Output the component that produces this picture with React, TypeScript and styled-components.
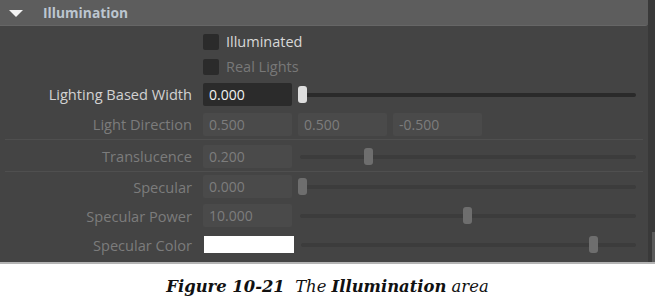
import { FC } from "react";
import styled, { createGlobalStyle } from "styled-components";

const GlobalStyle = createGlobalStyle`
    body {
        margin: 0;
        background: #fff;
    }
`

type SliderProps = { value: number; active?: boolean }

const Slider: FC<SliderProps> = ({ value, active }) => (
    <SliderWrap>
        <Track $active={active} />
        <Thumb $active={active} style={{ left: `calc(${value} * (100% - 9px))` }} />
    </SliderWrap>
)

type RowProps = { label: string; dim?: boolean; children?: React.ReactNode; height?: number }

const Row: FC<RowProps> = ({ label, dim, children, height }) => (
    <RowWrap $height={height}>
        <Label $dim={dim}>{label}</Label>
        <Controls>{children}</Controls>
    </RowWrap>
)

export default function App() {
    return <>
        <GlobalStyle />
        <Page>
            <Panel>
                <Main>
                    <Header>
                        <Arrow />
                        <Title>Illumination</Title>
                    </Header>
                    <Group $top={3}>
                        <CheckRow>
                            <Box />
                            <CheckText>Illuminated</CheckText>
                        </CheckRow>
                        <CheckRow>
                            <Box />
                            <CheckText $dim>Real Lights</CheckText>
                        </CheckRow>
                        <Row label="Lighting Based Width">
                            <Field $active>0.000</Field>
                            <Slider value={0} active />
                        </Row>
                        <Row label="Light Direction" dim>
                            <Field>0.500</Field>
                            <Field>0.500</Field>
                            <Field>-0.500</Field>
                        </Row>
                    </Group>
                    <Separator />
                    <Group $top={1}>
                        <Row label="Translucence" dim>
                            <Field>0.200</Field>
                            <Slider value={0.2} />
                        </Row>
                    </Group>
                    <Separator />
                    <Group $top={0}>
                        <Row label="Specular" dim height={29}>
                            <Field>0.000</Field>
                            <Slider value={0} />
                        </Row>
                        <Row label="Specular Power" dim height={29}>
                            <Field>10.000</Field>
                            <Slider value={0.503} />
                        </Row>
                        <Row label="Specular Color" dim height={29}>
                            <Swatch />
                            <Slider value={0.885} />
                        </Row>
                    </Group>
                </Main>
                <ScrollBar>
                    <ScrollThumb />
                </ScrollBar>
            </Panel>
            <Caption>
                <span><b>Figure 10-21</b>&nbsp; The <b>Illumination</b> area</span>
            </Caption>
        </Page>
    </>
}

const Page = styled.div`
    width: 655px;
    height: 303px;
    display: flex;
    flex-direction: column;
    background: #fff;
    font-family: "Open Sans", "Noto Sans", sans-serif;
`

const Panel = styled.div`
    display: flex;
    height: 262px;
    background: #444444;
    border-bottom: 2px solid #b4b4b4;
`

const Main = styled.div`
    flex: 1;
    display: flex;
    flex-direction: column;
`

const Header = styled.div`
    height: 25px;
    display: flex;
    align-items: center;
    background: #5d5d5d;
    border-bottom: 1px solid #666;
    border-radius: 0 0 3px 0;
    padding-left: 9px;
    gap: 20px;
`

const Arrow = styled.div`
    width: 0;
    height: 0;
    border-left: 7px solid transparent;
    border-right: 7px solid transparent;
    border-top: 7px solid #f4f4f4;
    margin-top: 1px;
`

const Title = styled.span`
    color: #bcc6d0;
    font-weight: 700;
    font-size: 13.8px;
`

const Group = styled.div<{ $top: number }>`
    display: flex;
    flex-direction: column;
    padding-top: ${p => p.$top}px;
`

const Separator = styled.div`
    height: 0;
    margin: 0 5px;
    border-top: 1px solid #4f4f4f;
`

const CheckRow = styled.div`
    height: 25px;
    display: flex;
    align-items: center;
    padding-left: 203px;
    gap: 7px;
`

const Box = styled.div`
    width: 16px;
    height: 16px;
    border-radius: 2px;
    background: #2b2b2b;
`

const CheckText = styled.span<{ $dim?: boolean }>`
    font-size: 14.5px;
    color: ${p => p.$dim ? "#787878" : "#d8d8d8"};
`

const RowWrap = styled.div<{ $height?: number }>`
    height: ${p => p.$height ?? 30}px;
    display: grid;
    grid-template-columns: 192px 1fr;
    column-gap: 11px;
    align-items: center;
`

const Label = styled.span<{ $dim?: boolean }>`
    text-align: right;
    font-size: 14.6px;
    color: ${p => p.$dim ? "#7c7c7c" : "#d2d2d2"};
    white-space: nowrap;
`

const Controls = styled.div`
    display: flex;
    align-items: center;
    gap: 6px;
    padding-right: 5px;
`

const Field = styled.div<{ $active?: boolean }>`
    width: 89px;
    height: 23px;
    box-sizing: border-box;
    padding: 0 6px;
    display: flex;
    align-items: center;
    border-radius: 2px;
    font-size: 14px;
    background: ${p => p.$active ? "#2b2b2b" : "#4a4a4a"};
    color: ${p => p.$active ? "#f2f2f2" : "#7d7d7d"};
`

const Swatch = styled.div`
    width: 90px;
    height: 17px;
    margin-left: 1px;
    margin-right: -1px;
    background: #fff;
`

const SliderWrap = styled.div`
    position: relative;
    flex: 1;
    height: 17px;
    margin-right: 7px;
`

const Track = styled.div<{ $active?: boolean }>`
    position: absolute;
    left: 2px;
    right: 0;
    top: 7px;
    height: 4px;
    border-radius: 2px;
    background: ${p => p.$active ? "#2a2a2a" : "#3c3c3c"};
`

const Thumb = styled.div<{ $active?: boolean }>`
    position: absolute;
    top: 0;
    width: 9px;
    height: 17px;
    border-radius: 3px;
    background: ${p => p.$active ? "#dedede" : "#6e6e6e"};
`

const ScrollBar = styled.div`
    width: 7px;
    display: flex;
    flex-direction: column;
    justify-content: flex-end;
    align-items: flex-end;
    background: #393939;
`

const ScrollThumb = styled.div`
    width: 3px;
    height: 30px;
    background: #5a5a5a;
`

const Caption = styled.div`
    flex: 1;
    display: flex;
    align-items: center;
    justify-content: center;
    font-family: "DejaVu Serif", "Liberation Serif", serif;
    font-style: italic;
    font-size: 16.4px;
    color: #111;
    padding-top: 6px;
`
